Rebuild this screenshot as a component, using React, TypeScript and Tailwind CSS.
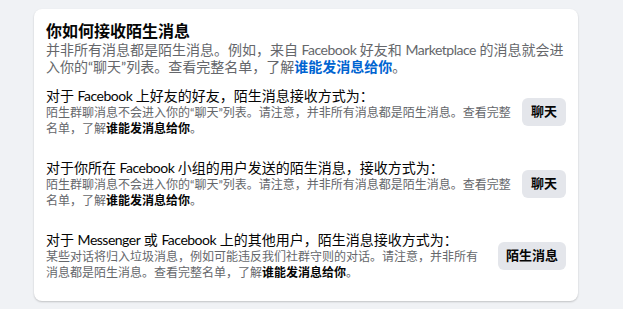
import React from "react";

const FONT = {
  fontFamily: 'Lato, "Noto Sans CJK SC", Arial, sans-serif',
};

function L({ children }: { children: React.ReactNode }) {
  return <span className="tracking-[-0.5px]">{children}</span>;
}

function Section({
  heading,
  lines,
  button,
  buttonW,
}: {
  heading: React.ReactNode;
  lines: string;
  button: string;
  buttonW: string;
}) {
  return (
    <div className="flex items-center gap-[10px]">
      <div className="flex-1 min-w-0">
        <div className="text-[14px] leading-[19px] text-[#050505]">{heading}</div>
        <div className="text-[12px] leading-[16px] text-[#65676b]">
          {lines}
          <span className="font-bold text-[#050505]">谁能发消息给你</span>。
        </div>
      </div>
      <button
        className={`shrink-0 h-[28px] rounded-[6px] bg-[#e4e6eb] text-[13px] font-bold text-[#050505] flex items-center justify-center ${buttonW}`}
      >
        {button}
      </button>
    </div>
  );
}

export default function App() {
  return (
    <div className="min-h-screen bg-[#f0f2f5] pt-[9px] pl-[34px]" style={FONT}>
      <div className="w-[544px] h-[292px] rounded-[8px] bg-white shadow-[0_1px_2px_rgba(0,0,0,0.2)] pt-[12px] px-[12px]">
        <div className="text-[16px] leading-[20px] font-bold text-[#050505]">你如何接收陌生消息</div>
        <div className="text-[14px] leading-[17px] text-[#65676b]">
          并非所有消息都是陌生消息。例如，来自 <L>Facebook</L> 好友和 <L>Marketplace</L> 的消息就会进入你的“聊天”列表。查看完整名单，了解
          <span className="font-bold text-[#0064d1]">谁能发消息给你</span>。
        </div>
        <div className="mt-[11px] flex flex-col gap-[21px]">
          <Section
            heading={<>对于 <L>Facebook</L> 上好友的好友，陌生消息接收方式为：</>}
            lines="陌生群聊消息不会进入你的“聊天”列表。请注意，并非所有消息都是陌生消息。查看完整名单，了解"
            button="聊天"
            buttonW="w-[44px]"
          />
          <Section
            heading={<>对于你所在 <L>Facebook</L> 小组的用户发送的陌生消息，接收方式为：</>}
            lines="陌生群聊消息不会进入你的“聊天”列表。请注意，并非所有消息都是陌生消息。查看完整名单，了解"
            button="聊天"
            buttonW="w-[44px]"
          />
          <Section
            heading={<>对于 <L>Messenger</L> 或 <L>Facebook</L> 上的其他用户，陌生消息接收方式为：</>}
            lines="某些对话将归入垃圾消息，例如可能违反我们社群守则的对话。请注意，并非所有消息都是陌生消息。查看完整名单，了解"
            button="陌生消息"
            buttonW="w-[68px]"
          />
        </div>
      </div>
    </div>
  );
}
